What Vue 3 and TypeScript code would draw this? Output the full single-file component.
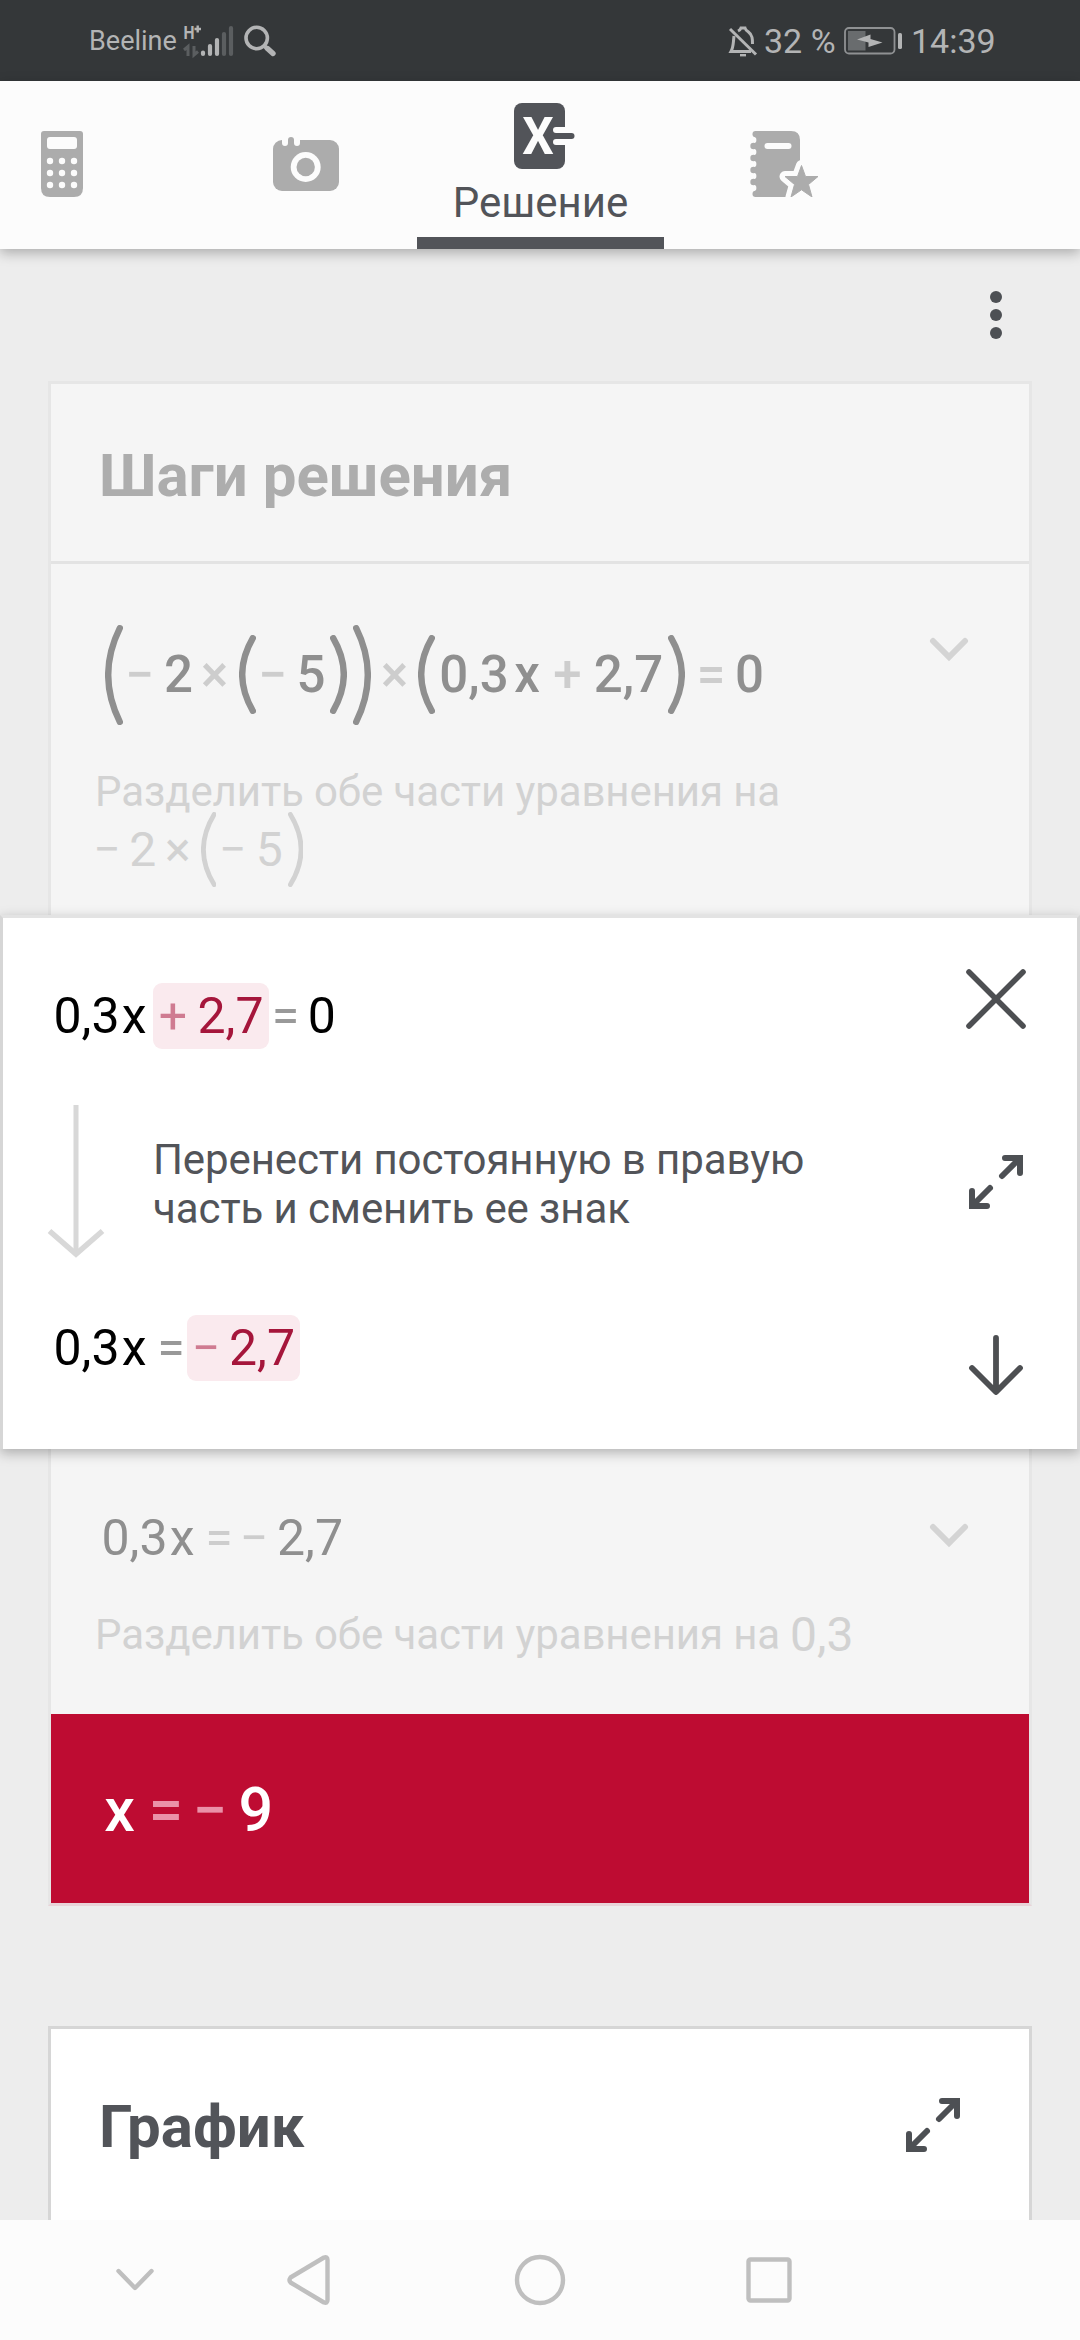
<script setup lang="ts">
import { h, type FunctionalComponent } from 'vue'

type Kind = 'num' | 'op' | 'open' | 'close' | 'group'

interface Token {
  kind: Kind
  from: number
  to: number
  text?: string
  tall?: number
  items?: Token[]
}

const num = (text: string, from: number, to: number): Token => ({ kind: 'num', text, from, to })
const op = (text: string, from: number, to: number): Token => ({ kind: 'op', text, from, to })
const open = (from: number, to: number, tall: number): Token => ({ kind: 'open', from, to, tall })
const close = (from: number, to: number, tall: number): Token => ({ kind: 'close', from, to, tall })
const group = (from: number, to: number, items: Token[]): Token => ({ kind: 'group', from, to, items })

// A bracket is a shallow arc with round ends, mirrored for the closing one.
const bracket = (t: Token, stroke: number) => {
  const w = t.to - t.from
  const height = t.tall ?? 0
  const s = stroke / 2
  const near = t.kind === 'open' ? s : w - s
  const far = t.kind === 'open' ? w - s : s
  const ctrl = 2 * near - far
  return h('svg', { class: 'fx-bracket', width: w, height, viewBox: `0 0 ${w} ${height}` }, [
    h('path', {
      d: `M${far} ${s} Q${ctrl} ${height / 2} ${far} ${height - s}`,
      'stroke-width': stroke,
      'stroke-linecap': 'round',
      stroke: 'currentColor',
      fill: 'none',
    }),
  ])
}

const renderTokens = (items: Token[], start: number, stroke: number): unknown[] => {
  let cursor = start
  return items.map((t) => {
    const style = { marginLeft: `${t.from - cursor}px`, width: `${t.to - t.from}px` }
    cursor = t.to
    if (t.kind === 'group') {
      return h('span', { class: 'fx-group', style }, renderTokens(t.items ?? [], t.from, stroke) as never)
    }
    if (t.kind === 'open' || t.kind === 'close') {
      return h('span', { class: 'fx-token', style }, [bracket(t, stroke)])
    }
    return h('span', { class: ['fx-token', `fx-${t.kind}`], style }, t.text)
  })
}

const Formula: FunctionalComponent<{ items: Token[]; start: number; stroke?: number }> = (props) =>
  h('div', { class: 'fx' }, renderTokens(props.items, props.start, props.stroke ?? 6) as never)
Formula.props = ['items', 'start', 'stroke']

const source: Token[] = [
  open(104.5, 122.5, 100),
  op('−', 129, 150),
  num('2', 165, 192),
  op('×', 203, 226),
  open(239, 256, 79),
  op('−', 262, 283),
  num('5', 299, 323),
  close(329.5, 346.5, 79),
  close(353, 371, 100),
  op('×', 383, 406),
  open(418, 435, 79),
  num('0,3', 442, 506),
  num('x', 515, 539),
  op('+', 555, 580),
  num('2,7', 596, 661),
  close(667.5, 684.5, 79),
  op('=', 700, 722),
  num('0', 737, 762),
]

const divisor: Token[] = [
  op('−', 97, 117),
  num('2', 131, 154.5),
  op('×', 167.5, 188),
  open(200.5, 216, 75),
  op('−', 222.5, 243),
  num('5', 258, 280.5),
  close(287.5, 303, 75),
]

const before: Token[] = [
  num('0,3', 56, 117),
  num('x', 123.5, 145),
  group(153, 269, [op('+', 161, 185), num('2,7', 200, 261)]),
  op('=', 275.5, 295.5),
  num('0', 310, 333.5),
]

const after: Token[] = [
  num('0,3', 56, 117),
  num('x', 123.5, 145),
  op('=', 161, 181),
  group(187, 300, [op('−', 196, 216), num('2,7', 231, 293)]),
]

const moved: Token[] = [
  num('0,3', 104, 165),
  num('x', 171.5, 193),
  op('=', 209, 229),
  op('−', 244, 264),
  num('2,7', 279, 341),
]

const answer: Token[] = [
  num('x', 105, 134),
  op('=', 153, 179),
  op('−', 197, 223),
  num('9', 241, 270.5),
]

const keyCols = [9, 21, 33]
const keyRows = [30, 42, 54]
const bumps = [15, 27, 39, 51]
const notches = [9, 21, 33, 45, 57]
</script>

<template>
  <div class="screen">
    <div class="status">
      <span class="carrier">Beeline</span>
      <svg class="signal" width="52" height="50" viewBox="183 15 52 50">
        <text x="183.5" y="38" font-size="18" font-weight="700" textLength="11" lengthAdjust="spacingAndGlyphs" fill="#b3b4b5">H</text>
        <path d="M194.5 28H201M197.7 24.5V31.500" stroke="#b3b4b5" stroke-width="2.4" />
        <path d="M184 49L188 45.500V55M194 45V54L198 50.500" stroke="#5b5e60" stroke-width="3" fill="none" />
        <g stroke-width="4.200" stroke-linecap="round">
          <path d="M203 51.500V53M210 45V53M217 39V53" stroke="#b3b4b5" />
          <path d="M224 33V53M231 27V53" stroke="#5b5e60" />
        </g>
      </svg>
      <svg class="search" width="34" height="34" viewBox="243 24 34 34" fill="none" stroke="#b3b4b5" stroke-linecap="round">
        <circle cx="256.700" cy="38" r="10.700" stroke-width="3.600" />
        <path d="M264.500 46L267 48.500" stroke-width="4" />
        <path d="M267.500 48.500L273 53.500" stroke-width="5.400" />
      </svg>
      <div class="grow"></div>
      <svg width="30" height="34" viewBox="728 23 30 34" fill="none" stroke="#b3b4b5" stroke-width="3">
        <path d="M730 28L756 53.500" />
        <path d="M734 35C733 44 733.500 46 731 50.500H751" />
        <path d="M738 30C740 29 740.500 28.500 741 27H745C745.500 29 747 30 748.500 31C752.500 34 752.500 38 752.500 43" />
        <path d="M740 54.200H746" stroke-width="2.400" />
      </svg>
      <span class="percent">32 %</span>
      <svg class="battery" width="60" height="30" viewBox="843 26 60 30">
        <rect x="845" y="28" width="49.500" height="25.500" rx="4" fill="none" stroke="#8f9193" stroke-width="1.800" />
        <rect x="848" y="31" width="17.500" height="19.500" fill="#696c6e" />
        <path d="M857 39.500L870.500 34.500L870.500 39L882.500 42.500L868.500 47L868.500 42.500Z" fill="#b3b4b5" />
        <rect x="898" y="33" width="4" height="16" rx="1.600" fill="#b3b4b5" />
      </svg>
      <span class="clock">14:39</span>
    </div>

    <div class="tabs">
      <div class="tab tab-calc">
        <svg width="42" height="66" viewBox="0 0 42 66">
          <path d="M3 0H39Q42 0 42 3V57Q42 66 33 66H9Q0 66 0 57V3Q0 0 3 0Z" fill="#acacac" />
          <rect x="6" y="6" width="30" height="12" rx="3" fill="#fcfcfc" />
          <template v-for="y in keyRows" :key="y">
            <circle v-for="x in keyCols" :key="x" :cx="x" :cy="y" r="3.200" fill="#fcfcfc" />
          </template>
        </svg>
      </div>
      <div class="tab tab-camera">
        <svg width="66" height="54" viewBox="0 0 66 54">
          <rect y="3" width="66" height="51" rx="9" fill="#acacac" />
          <path d="M9 0V6a3 3 0 0 0 6 0V0ZM21 0V6a3 3 0 0 0 6 0V0Z" fill="#fcfcfc" />
          <path d="M15 8V3a3 3 0 0 1 6 0V8Z" fill="#acacac" />
          <circle cx="32.700" cy="30" r="15" fill="#fcfcfc" />
          <circle cx="32.700" cy="30" r="9.200" fill="#acacac" />
        </svg>
      </div>
      <div class="tab tab-solution">
        <svg class="solution-icon" width="61" height="66" viewBox="0 0 61 66">
          <rect width="51" height="66" rx="8" fill="#525459" />
          <text x="8.300" y="51" font-size="51" font-weight="700" textLength="31.500" lengthAdjust="spacingAndGlyphs" fill="#fcfcfc">X</text>
          <path d="M42 27H52M42 39H52" stroke="#fcfcfc" stroke-width="6" stroke-linecap="round" />
          <path d="M36 33H57.500" stroke="#525459" stroke-width="6" stroke-linecap="round" />
        </svg>
        <span class="tab-label">Решение</span>
        <div class="tab-line"></div>
      </div>
      <div class="tab tab-notes">
        <svg width="69" height="66" viewBox="0 0 69 66">
          <path d="M5 0H41Q50 0 50 9V66H5Z" fill="#acacac" />
          <circle v-for="y in notches" :key="y" cx="3.200" :cy="y" r="3.200" fill="#fcfcfc" />
          <circle v-for="y in bumps" :key="y" cx="3.500" :cy="y" r="3.200" fill="#acacac" />
          <rect x="2.500" y="0" width="8" height="6.200" rx="3" fill="#acacac" />
          <rect x="2.500" y="59.800" width="8" height="6.200" rx="3" fill="#acacac" />
          <path d="M17.500 15H38.500" stroke="#fcfcfc" stroke-width="6" stroke-linecap="round" />
          <path d="M51.500 34.500L55.500 45.500H68L58.500 53.500L62 66L51.500 58.800L41 66L44.500 53.500L35 45.500H47.500Z" fill="#fcfcfc" stroke="#fcfcfc" stroke-width="11" stroke-linejoin="round" />
          <path d="M51.500 34.500L55.500 45.500H68L58.500 53.500L62 66L51.500 58.800L41 66L44.500 53.500L35 45.500H47.500Z" fill="#acacac" stroke="#acacac" stroke-width="1" stroke-linejoin="round" />
        </svg>
      </div>
    </div>

    <div class="toolbar">
      <div class="more"><i></i><i></i><i></i></div>
    </div>

    <div class="card steps">
      <h2 class="title muted">Шаги решения</h2>

      <div class="step step-first">
        <div class="equation main-eq">
          <Formula :items="source" :start="51" :stroke="6.4" />
        </div>
        <svg class="chevron chevron-first" width="40" height="26" viewBox="0 0 40 26"><path d="M4 4L20 20L36 4" /></svg>
        <p class="note">Разделить обе части уравнения на</p>
        <div class="note-eq"><Formula :items="divisor" :start="51" :stroke="4.8" /></div>
      </div>

      <div class="active">
        <div class="active-body">
          <div class="equation black"><Formula :items="before" :start="3" /></div>
          <div class="hint">
            <svg width="58" height="154" viewBox="0 0 58 154" fill="none" stroke="#d8d8d8" stroke-width="5">
              <path d="M29 0V150" />
              <path d="M2.500 126L29 149L55.500 126" stroke-width="5.500" />
            </svg>
            <p>Перенести постоянную в правую<br />часть и сменить ее знак</p>
          </div>
          <div class="equation black"><Formula :items="after" :start="3" /></div>
        </div>
        <div class="actions">
          <svg width="60" height="60" viewBox="0 0 60 60"><path d="M3 3L57 57M57 3L3 57" stroke-width="5.600" /></svg>
          <svg width="60" height="60" viewBox="0 0 60 60">
            <g class="expand">
              <path d="M36 24L53 7M39 6H54V21" /><path d="M24 36L7 53M6 39V54H21" />
              <path d="M54 6H51V3H57V9H54ZM6 54H9V57H3V51H6Z" class="corner" />
            </g>
          </svg>
          <svg width="60" height="60" viewBox="0 0 60 60"><path d="M30 3V56M6 33L30 57L54 33" stroke-width="5.800" /></svg>
        </div>
      </div>

      <div class="step step-second">
        <div class="equation faded"><Formula :items="moved" :start="51" /></div>
        <svg class="chevron chevron-second" width="40" height="26" viewBox="0 0 40 26"><path d="M4 4L20 20L36 4" /></svg>
        <div class="note-row">
          <p class="note">Разделить обе части уравнения на</p>
          <span class="note-number">0,3</span>
        </div>
      </div>

      <div class="result"><Formula :items="answer" :start="51" /></div>
    </div>

    <div class="card graph">
      <h2 class="title">График</h2>
      <svg class="graph-expand" width="60" height="60" viewBox="0 0 60 60">
        <g class="expand">
          <path d="M36 24L53 7M39 6H54V21" /><path d="M24 36L7 53M6 39V54H21" />
          <path d="M54 6H51V3H57V9H54ZM6 54H9V57H3V51H6Z" class="corner" />
        </g>
      </svg>
    </div>

    <div class="nav">
      <svg width="1080" height="120" viewBox="0 0 1080 120" fill="none" stroke="#bfbfbf" stroke-width="4.400" stroke-linecap="round" stroke-linejoin="round">
        <path d="M118.500 51L135 68L151.500 51" />
        <path d="M290.500 57.500Q288.500 60 290.500 62.500L324 82.500Q327.500 83.500 327.500 80V40Q327.500 36.500 324 37.500Z" />
        <circle cx="540" cy="60" r="23" />
        <rect x="748.500" y="39.500" width="41" height="41" rx="2" />
      </svg>
    </div>
  </div>
</template>

<style>
html,
body {
  margin: 0;
  background: #ededed;
}

.fx {
  display: flex;
  align-items: center;
  height: 100%;
}

.fx-token,
.fx-group {
  display: flex;
  flex: none;
  align-items: center;
  justify-content: center;
  white-space: nowrap;
}

.fx-group {
  justify-content: flex-start;
  height: 66px;
  border-radius: 9px;
  background: #faeaee;
  color: #a5163b;
}

.fx-op {
  color: var(--op);
}

.fx-group .fx-op {
  color: #cf7b91;
}

.fx-bracket {
  display: block;
  flex: none;
}
</style>

<style scoped>
.screen {
  display: flex;
  flex-direction: column;
  width: 1080px;
  height: 2340px;
  overflow: hidden;
  background: #ededed;
  color: #525459;
  font-family: Roboto, "Noto Sans", sans-serif;
}

.screen svg {
  display: block;
  flex: none;
}

.status {
  display: flex;
  flex: none;
  align-items: center;
  box-sizing: border-box;
  height: 81px;
  padding: 0 83px 0 89px;
  background: #343739;
  color: #b3b4b5;
  white-space: nowrap;
}

.carrier {
  width: 94px;
  padding-top: 1px;
  font-size: 27px;
}

.search {
  margin-left: 8px;
}

.grow {
  flex: 1;
}

.percent {
  width: 78px;
  padding-left: 6px;
  font-size: 34px;
  box-sizing: content-box;
}

.battery {
  margin-left: 1px;
}

.clock {
  width: 86px;
  padding-left: 8px;
  font-size: 34px;
}

.tabs {
  position: relative;
  z-index: 2;
  display: flex;
  flex: none;
  height: 168px;
  background: #fcfcfc;
  box-shadow: 0 4px 12px rgba(0, 0, 0, 0.28);
}

.tab {
  display: flex;
  align-items: center;
  box-sizing: border-box;
}

.tab-calc {
  width: 273px;
  padding: 0 0 2px 41px;
}

.tab-camera {
  width: 144px;
  padding-bottom: 2px;
}

.tab-solution {
  flex-direction: column;
  width: 247px;
  padding-top: 22px;
}

.solution-icon {
  margin-left: 7px;
}

.tab-label {
  margin-top: 9px;
  font-size: 42px;
  line-height: 50px;
}

.tab-line {
  width: 247px;
  height: 12px;
  margin-top: auto;
  background: #525459;
}

.tab-notes {
  padding: 0 0 2px 86px;
}

.toolbar {
  display: flex;
  flex: none;
  justify-content: flex-end;
  box-sizing: border-box;
  height: 132px;
  padding: 42px 78px 0 0;
}

.more {
  display: flex;
  flex-direction: column;
  gap: 6px;
}

.more i {
  width: 12px;
  height: 12px;
  border-radius: 50%;
  background: #4d5054;
}

.card {
  flex: none;
  box-sizing: border-box;
  width: 984px;
  margin: 0 48px;
  border: 3px solid #e6e6e6;
  background: #f5f5f5;
}

.title {
  box-sizing: border-box;
  height: 180px;
  margin: 0;
  padding-left: 48px;
  font-size: 60px;
  font-weight: 700;
  line-height: 183px;
}

.muted {
  border-bottom: 3px solid #e3e3e3;
  color: #adadad;
}

.steps {
  height: 1525px;
  border-bottom-color: #e9d3d8;
}

.step {
  position: relative;
  box-sizing: border-box;
}

.step-first {
  height: 351px;
  padding-top: 60px;
}

.equation {
  --op: #cdcdcd;
  height: 66px;
  font-size: 50px;
}

.main-eq {
  height: 101px;
  color: #8f8f8f;
  font-size: 51px;
  font-weight: 500;
}

.faded {
  color: #8f8f8f;
}

.black {
  --op: #999;
  color: #000;
}

.chevron {
  position: absolute;
  right: 60px;
  fill: none;
  stroke: #d4d4d4;
  stroke-width: 6;
  stroke-linecap: round;
}

.chevron-first {
  top: 73px;
}

.chevron-second {
  top: 74px;
}

.note {
  margin: 0;
  color: #d2d2d2;
  font-size: 42px;
  line-height: 41px;
  letter-spacing: -0.1px;
  white-space: nowrap;
}

.step-first .note {
  margin-top: 46px;
  padding-left: 44px;
}

.note-eq {
  --op: #d2d2d2;
  height: 75px;
  color: #d2d2d2;
  font-size: 48px;
}

.active {
  position: relative;
  z-index: 1;
  display: flex;
  justify-content: space-between;
  box-sizing: border-box;
  width: 1080px;
  height: 534px;
  margin-left: -51px;
  border: solid #d6d6d6;
  border-width: 3px 3px 0;
  border-top-color: #e3e3e3;
  background: #fff;
  box-shadow: 0 4px 12px rgba(0, 0, 0, 0.28);
}

.active-body {
  padding-top: 65px;
}

.hint {
  display: flex;
  height: 152px;
  margin: 56px 0 58px;
  padding-left: 44px;
}

.hint p {
  margin: 30px 0 0 48px;
  font-size: 42px;
  line-height: 49px;
  letter-spacing: -0.1px;
  white-space: nowrap;
}

.actions {
  display: flex;
  flex-direction: column;
  gap: 123px;
  padding: 51px 51px 0 0;
  fill: none;
  stroke: #4d4f52;
  stroke-linecap: round;
  stroke-linejoin: round;
}

.expand {
  fill: none;
  stroke: #4d5054;
  stroke-width: 6;
  stroke-linecap: round;
}

.corner {
  fill: #4d5054;
  stroke: none;
}

.step-second {
  height: 265px;
  padding-top: 56px;
}

.note-row {
  display: flex;
  align-items: center;
  height: 48px;
  margin-top: 39px;
  padding-left: 44px;
}

.note-number {
  margin-left: 10px;
  color: #d2d2d2;
  font-size: 48px;
}

.result {
  --op: #eb91a8;
  box-sizing: border-box;
  height: 189px;
  padding-top: 3px;
  background: #be0c32;
  color: #fff;
  font-size: 61px;
  font-weight: 500;
}

.graph {
  display: flex;
  align-items: flex-start;
  justify-content: space-between;
  height: 194px;
  margin-top: 120px;
  border-color: #d6d6d6;
  border-bottom: 0;
  background: #fff;
}

.graph .title {
  line-height: 196px;
}

.graph-expand {
  margin: 66px 66px 0 0;
}

.nav {
  flex: none;
  height: 120px;
  background: #fcfcfc;
}
</style>
